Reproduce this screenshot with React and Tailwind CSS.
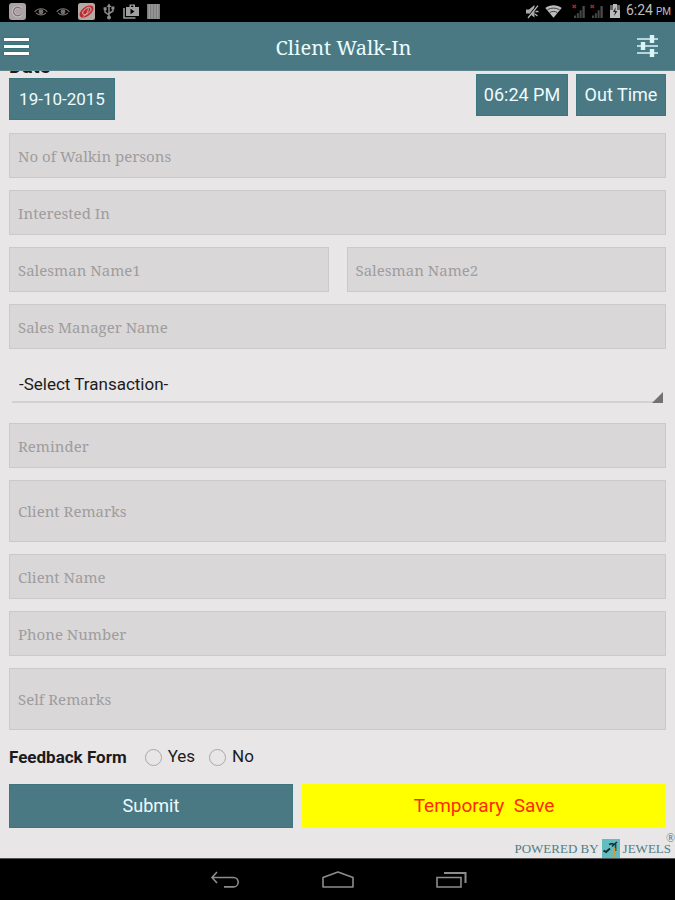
import React from "react";

const serif = "font-['Noto_Serif','Droid_Serif','DejaVu_Serif_Condensed','DejaVu_Serif',serif]";
const box =
  "block w-full rounded-none border border-[#cbc9ca] bg-[#d9d7d8] px-2 text-[15px] text-[#444] placeholder:text-[#9f9d9e] placeholder:opacity-100 outline-none " +
  serif;
const tealButton = "border border-[#3b757d] bg-[#4b7983] text-[#eefbff] leading-5";

function Field({ label, type = "text" }) {
  return (
    <input type={type} aria-label={label} placeholder={label} className={`${box} h-[45px]`} />
  );
}

function Remarks({ label }) {
  return (
    <textarea
      aria-label={label}
      placeholder={label}
      className={`${box} h-[62px] resize-none py-5 leading-5`}
    />
  );
}

function EyeIcon() {
  return (
    <svg width="14" height="10" viewBox="0 0 14 10" fill="none" stroke="#77716f" strokeWidth="1.1">
      <path d="M.8 6C3.2 1.6 10.8 1.6 13.2 6M2 6.8C4.8 9.6 9.2 9.6 12 6.8" />
      <circle cx="7" cy="5.8" r="1.9" fill="#77716f" />
    </svg>
  );
}

function SignalIcon() {
  return (
    <svg width="14" height="15" viewBox="0 0 14 15">
      <path d="M2 14v-2.4h2V14zM4.8 14V9.2h2V14zM7.6 14V6.2h2V14zM10.4 14V2h2.4v12z" fill="#484848" />
      <path d="M.6 1l3.4 3M4 1L.6 4" stroke="#b51f25" strokeWidth="1.5" />
    </svg>
  );
}

function StatusBar() {
  return (
    <div className="flex h-[22px] items-center justify-between bg-black pl-[9px] pr-1">
      <div className="flex items-center gap-2">
        <svg width="17" height="17" viewBox="0 0 17 17">
          <rect width="17" height="17" rx="3" fill="#aaa2a4" />
          <path d="M12 5.4A4.4 4.4 0 1 0 12 11.6" fill="none" stroke="#cbc5c7" strokeWidth="3" />
          <path d="M11.8 5.6A4.2 4.2 0 1 0 11.8 11.4" fill="none" stroke="#80757a" strokeWidth="1.4" />
        </svg>
        <EyeIcon />
        <EyeIcon />
        <svg width="17" height="17" viewBox="0 0 17 17">
          <rect width="17" height="17" rx="2.5" fill="#b5a9a6" />
          <g transform="rotate(-38 8.5 8.5)" fill="none">
            <ellipse cx="8.5" cy="8.5" rx="8" ry="4.6" fill="#b92d32" />
            <ellipse cx="9" cy="8.4" rx="5" ry="2.6" stroke="#d7b7b2" strokeWidth=".9" />
            <path d="M3 10.5C7 11 10 9.5 12 7" stroke="#d7b7b2" strokeWidth=".8" />
          </g>
        </svg>
        <svg width="12" height="17" viewBox="0 0 12 17" fill="none" stroke="#8b8b8b" strokeWidth="1.5">
          <path d="M6 3v11M6 12L2 9V6M6 10.5l4-2.5V5" />
          <path d="M6 .5L8.4 4H3.6zM.6 4.3h3V7.2h-3zM8.4 3.6h3v2.8h-3z" fill="#8b8b8b" stroke="none" />
          <circle cx="6" cy="14.6" r="2" fill="#8b8b8b" stroke="none" />
        </svg>
        <svg width="16" height="15" viewBox="0 0 16 15">
          <path d="M1 4v10h11.5" fill="none" stroke="#999" strokeWidth="1.6" />
          <path d="M3 3h3.5V.4h5.5V3h4v9H3zM8 1.7V3h2.4V1.7zM7.5 4.8v5.4l4-2.7z" fill="#a0a0a0" fillRule="evenodd" />
        </svg>
        <svg width="13" height="15" viewBox="0 0 13 15">
          <path d="M0 0h13v15H0z" fill="#7d7d7d" />
          <path d="M2.2 0v15M5 0v15M8 0v15M10.8 0v15" stroke="#a9a9a9" strokeWidth="1" />
        </svg>
      </div>
      <div className="flex items-center">
        <svg className="mr-1.5" width="14" height="15" viewBox="0 0 14 15">
          <path d="M1 5.5h3L9.5 1v12.5L4 9.5H1z" fill="#aaa" />
          <path d="M12.6 1L2.4 14" stroke="#000" strokeWidth="1.8" />
          <path d="M13 1.6L3 14M10.5 7.5h3M10 10l2.5 2" stroke="#b4b4b4" strokeWidth="1.3" fill="none" />
        </svg>
        <svg className="mr-2.5" width="17" height="13" viewBox="0 0 17 13">
          <path d="M.3 3C5-.8 12-.8 16.7 3L8.5 12.8z" fill="#bdbdbd" />
          <path d="M2.4 4.8C6 2.6 11 2.6 14.6 4.8M4.7 7.5c2.5-1.4 5-1.4 7.6 0" fill="none" stroke="#333" strokeWidth=".9" />
        </svg>
        <span className="mr-1 flex"><SignalIcon /></span>
        <span className="mr-1.5 flex"><SignalIcon /></span>
        <svg className="mr-1.5" width="10" height="14" viewBox="0 0 10 14">
          <path d="M3 0h4v1.6h3V14H0V1.6h3z" fill="#bcbcbc" />
          <path d="M0 1.6h3V6H0zM7 1.6h3V6H7z" fill="#666" />
          <path d="M5.8 3L3 8h2l-.8 4L7.3 7H5.2z" fill="#222" />
        </svg>
        <span className="flex items-baseline gap-[3px] text-[14px] leading-[22px] text-[#bdbdbd]">
          6:24 <span className="text-[10px]">PM</span>
        </span>
      </div>
    </div>
  );
}

export default function App() {
  return (
    <div className="flex min-h-screen flex-col bg-[#e8e6e7] font-[Roboto,sans-serif] text-[#1c1b1c]">
      <StatusBar />
      <header className="grid h-[49px] grid-cols-[1fr_auto_1fr] items-center border-b border-[#5f868d] bg-[#4b7983] pl-1 pr-4">
        <button aria-label="Menu" className="flex w-[25px] flex-col gap-1">
          <span className="h-[3px] bg-white shadow-[0_0_2px_#075f69]" />
          <span className="h-[3px] bg-white shadow-[0_0_2px_#075f69]" />
          <span className="h-[3px] bg-white shadow-[0_0_2px_#075f69]" />
        </button>
        <h1 className={`pt-1 pl-6 text-[20px] text-[#e9fcff] ${serif}`}>Client Walk-In</h1>
        <button aria-label="Filters" className="justify-self-end">
          <svg width="23" height="24" viewBox="0 0 23 24" fill="none" stroke="#d9f5f8">
            <path d="M1 5h21M1 12h21M1 19h21" strokeWidth="1.7" />
            <path d="M16 1v8M7 8v8M16 15v8" strokeWidth="4.4" />
          </svg>
        </button>
      </header>

      <main className="flex flex-1 flex-col overflow-hidden">
        <form className="flex flex-col gap-3 px-[9px]" onSubmit={(e) => e.preventDefault()}>
          <div className="-mt-[15px] mb-px flex items-end justify-between">
            <div className="flex flex-col items-start">
              <label htmlFor="date" className="mb-0.5 text-[20px] leading-5 font-bold">Date</label>
              <button id="date" type="button" className={`${tealButton} h-[42px] w-[106px] text-[17px]`}>19-10-2015</button>
            </div>
            <div className="mb-1 flex gap-2">
              <button type="button" className={`${tealButton} h-[42px] w-[92px] text-[18px]`}>06:24 PM</button>
              <button type="button" className={`${tealButton} h-[42px] w-[90px] text-[18px]`}>Out Time</button>
            </div>
          </div>
          <Field label="No of Walkin persons" />
          <Field label="Interested In" />
          <div className="grid grid-cols-2 gap-[18px]">
            <Field label="Salesman Name1" />
            <Field label="Salesman Name2" />
          </div>
          <Field label="Sales Manager Name" />
          <div className="relative mx-[3px] mb-2">
            <select
              aria-label="Transaction"
              className="block h-[42px] w-full appearance-none border-b-2 border-[#d3d1d2] px-[7px] pt-2 text-[17px] text-[#1c1b1c] outline-none"
            >
              <option>-Select Transaction-</option>
            </select>
            <svg className="pointer-events-none absolute right-0 bottom-0" width="11" height="11" viewBox="0 0 11 11">
              <path d="M11 0v11H0z" fill="#737172" />
            </svg>
          </div>
          <Field label="Reminder" />
          <Remarks label="Client Remarks" />
          <Field label="Client Name" />
          <Field label="Phone Number" type="tel" />
          <Remarks label="Self Remarks" />
          <fieldset className="flex h-[30px] items-center text-[17px]">
            <legend className="float-left mr-[18px] text-[17px] leading-[30px] font-bold">Feedback Form</legend>
            <label className="mr-3.5 flex items-center gap-1.5">
              <input type="radio" name="feedback" className="size-[17px] appearance-none rounded-full border border-[#aaa8a9] checked:border-[5px]" />
              Yes
            </label>
            <label className="flex items-center gap-1.5">
              <input type="radio" name="feedback" className="size-[17px] appearance-none rounded-full border border-[#aaa8a9] checked:border-[5px]" />
              No
            </label>
          </fieldset>
          <div className="grid grid-cols-[284fr_364fr] gap-[9px]">
            <button type="submit" className={`${tealButton} h-11 text-[18px]`}>Submit</button>
            <button type="button" className="h-11 bg-[#ffff00] text-[19px] whitespace-pre text-[#ff2a00]">
              Temporary  Save
            </button>
          </div>
        </form>
        <footer className="mt-auto flex items-end justify-end gap-[3px] pt-2 pr-1 font-['Liberation_Serif',serif] text-[13px] leading-[18px] text-[#4f7d84]">
          <span>POWERED BY</span>
          <svg width="18" height="19" viewBox="0 0 18 19">
            <path d="M0 0h18v19H0z" fill="#62bdc2" />
            <path d="M1.5 11.5l2.5 1.5 4-3.5" fill="none" stroke="#152f31" strokeWidth="2" />
            <path d="M7 5.5l3-1 2 1 3-2.5M10 7.5l2-2" fill="none" stroke="#152f31" strokeWidth="1.6" />
            <path d="M13.6 5v7" stroke="#263d3c" strokeWidth="1.6" />
            <path d="M12.4 9v6l-2 2.5" fill="none" stroke="#d89b32" strokeWidth="2" />
          </svg>
          <span className="relative">
            JEWELS
            <span className="absolute -top-2 -right-1 text-[12px] leading-3">®</span>
          </span>
        </footer>
      </main>

      <nav className="flex h-[42px] items-center justify-center gap-[82px] border-t border-[#555] bg-black pl-0.5">
        <button aria-label="Back">
          <svg width="30" height="18" viewBox="0 0 30 18" fill="none" stroke="#8d8d8d" strokeWidth="1.6">
            <path d="M7 1L2 6.5 7 12M2 6.5h21.5a4.7 4.7 0 0 1 0 9.4H14" />
          </svg>
        </button>
        <button aria-label="Home">
          <svg width="32" height="18" viewBox="0 0 32 18" fill="none" stroke="#8d8d8d" strokeWidth="1.6">
            <path d="M1 16V6.5L16 1l15 5.5V16z" strokeLinejoin="round" />
          </svg>
        </button>
        <button aria-label="Recent apps">
          <svg width="31" height="18" viewBox="0 0 31 18" fill="none" stroke="#8d8d8d" strokeWidth="1.6">
            <path d="M1 6.5h24V16H1z" />
            <path d="M8 2h21.5v10" strokeWidth="2" />
          </svg>
        </button>
      </nav>
    </div>
  );
}
